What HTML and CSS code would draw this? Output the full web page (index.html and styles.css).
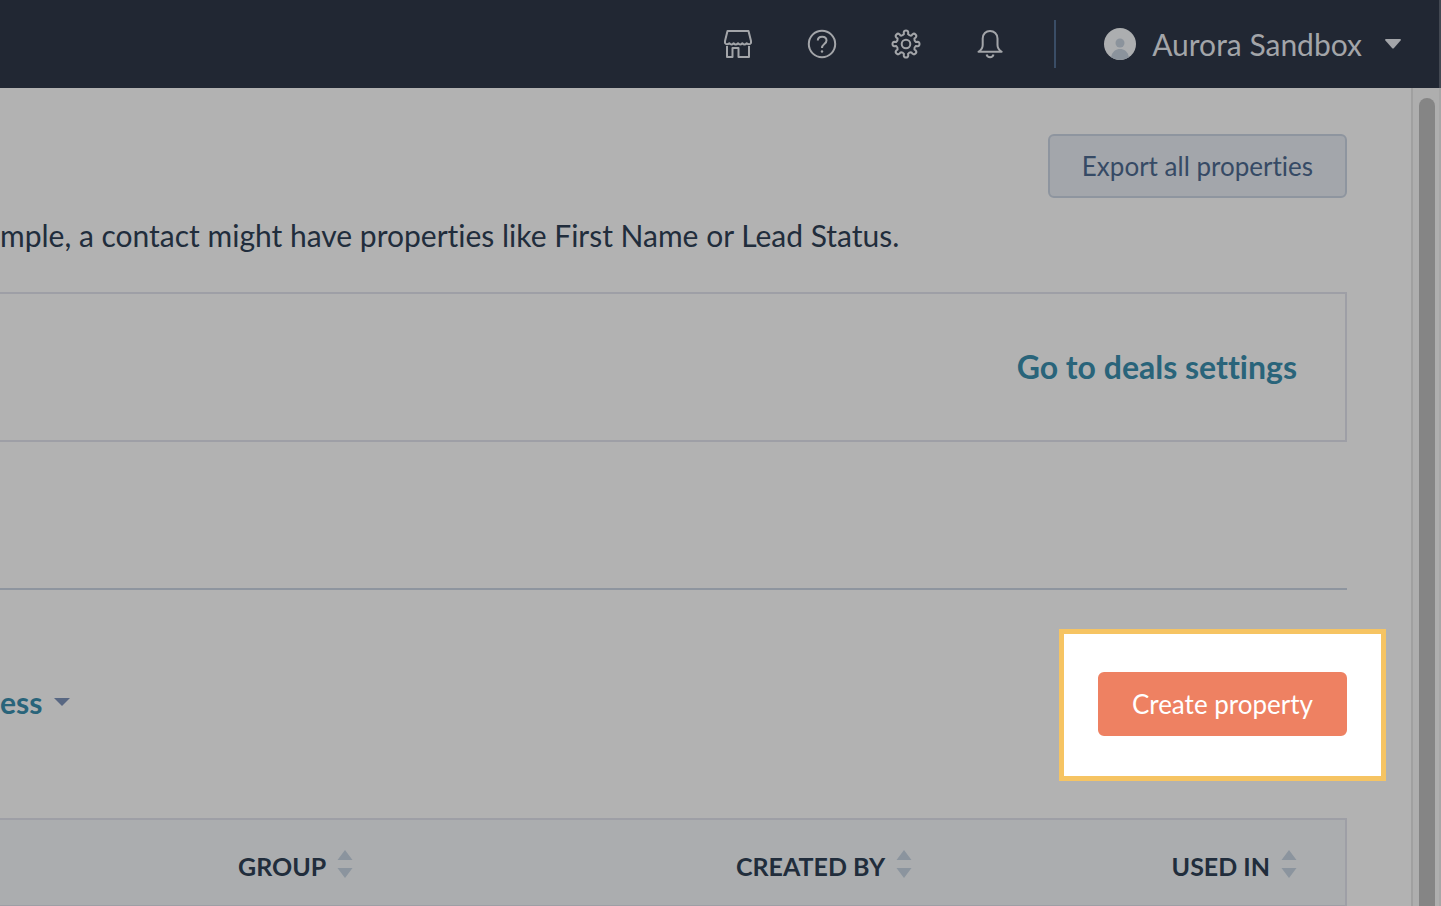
FILE: index.html
```html
<!DOCTYPE html>
<html lang="en">

<head>
  <meta charset="UTF-8">
  <meta name="viewport" content="width=device-width, initial-scale=1.0">
  <title>Properties</title>
  <link rel="stylesheet" href="styles.css">
</head>

<body>

  <header class="navbar">
    <nav class="nav-icons">
      <button type="button" class="nav-button" aria-label="Marketplace">
        <svg class="nav-icon" viewBox="0 0 32 32">
          <path d="M5.500 3h21L29 13v2q-1.800 2.400-4.300.2-2.200 2.400-4.400 0-2.200 2.400-4.300 0-2.200 2.400-4.400 0-2.200 2.400-4.300 0Q4.800 17.400 3 15v-2z" />
          <path d="M5 18v11h5.500v-9h6v9H27V18" />
        </svg>
      </button>
      <button type="button" class="nav-button" aria-label="Help">
        <svg class="nav-icon" viewBox="0 0 32 32">
          <circle cx="16" cy="16" r="13.200" />
          <path d="M11.800 12.500c0-5 8.700-5 8.700 0 0 3.700-4.500 3.500-4.500 7.500" />
          <circle class="dot" cx="16" cy="23.500" r="1.200" />
        </svg>
      </button>
      <button type="button" class="nav-button" aria-label="Settings">
        <svg class="nav-icon" viewBox="0 0 32 32">
          <circle cx="16" cy="16" r="4.300" />
          <path id="gear" />
        </svg>
      </button>
      <button type="button" class="nav-button" aria-label="Notifications">
        <svg class="nav-icon" viewBox="0 0 32 32">
          <path d="M4.500 23.800C7.500 22 8.700 20.500 8.700 17v-6.500C8.700 5.800 12 2.900 16 2.900s7.500 2.900 7.500 7.600V17c0 3.500 1.200 5 4.200 6.800z" />
          <path d="M12.600 26.500c.8 3.600 6.100 3.600 6.900 0" />
        </svg>
      </button>
    </nav>
    <button type="button" class="account">
      <svg class="avatar" viewBox="0 0 32 32">
        <circle cx="16" cy="16" r="16" fill="#acaeb0" />
        <circle cx="16" cy="15" r="4.500" fill="#8b939c" />
        <path d="M7 29.200C8.500 23 12 21 16 21s7.500 2 9 8.200Q16 34.800 7 29.200z" fill="#8b939c" />
      </svg>
      <span>Aurora Sandbox</span>
      <svg class="account-caret" viewBox="0 0 16 10"><path d="M1 0h14q1.500.5.600 1.600L9 9q-1 1-2 0L.4 1.600Q-.5.500 1 0z" /></svg>
    </button>
  </header>

  <div class="page">
    <main class="content">
      <div class="actions">
        <button type="button" class="button button-secondary">Export all properties</button>
      </div>
      <p class="description">mple, a contact might have properties like First Name or Lead Status.</p>

      <section class="panel">
        <a href="#" class="link">Go to deals settings</a>
      </section>

      <hr class="divider">

      <div class="toolbar">
        <button type="button" class="link filter">
          ess
          <svg class="filter-caret" viewBox="0 0 16 8"><path d="M0 0h16L8 8z" /></svg>
        </button>
        <div class="highlight">
          <button type="button" class="button button-primary">Create property</button>
        </div>
      </div>

      <table class="properties">
        <thead>
          <tr>
            <td class="col-name"></td>
            <th class="col-group" scope="col">
              <button type="button" class="sort">GROUP
                <svg class="sort-icon" viewBox="0 0 16 28"><path d="M8 0l7.500 10H.5zM.5 18h15L8 28z" /></svg>
              </button>
            </th>
            <th scope="col">
              <button type="button" class="sort">CREATED BY
                <svg class="sort-icon" viewBox="0 0 16 28"><path d="M8 0l7.500 10H.5zM.5 18h15L8 28z" /></svg>
              </button>
            </th>
            <th class="col-used" scope="col">
              <button type="button" class="sort">USED IN
                <svg class="sort-icon" viewBox="0 0 16 28"><path d="M8 0l7.500 10H.5zM.5 18h15L8 28z" /></svg>
              </button>
            </th>
          </tr>
        </thead>
      </table>
    </main>
    <div class="scrollbar">
      <div class="thumb"></div>
    </div>
  </div>

  <script>
    // eight rounded teeth around the settings icon
    function gearPath(teeth, inner, outer) {
      const point = (radius, degrees) => {
        const angle = degrees * Math.PI / 180;
        return (16 + radius * Math.sin(angle)).toFixed(2) + ' ' + (16 - radius * Math.cos(angle)).toFixed(2);
      };
      const step = 360 / teeth;
      let path = 'M' + point(inner, -12);
      for (let i = 0; i < teeth; i++) {
        const a = i * step;
        path += 'L' + point(outer - 2, a - 11);
        path += 'C' + point(outer + 0.5, a - 8) + ' ' + point(outer + 0.5, a + 8) + ' ' + point(outer - 2, a + 11);
        path += 'L' + point(inner, a + 12);
        path += 'Q' + point(inner - 1.2, a + step / 2) + ' ' + point(inner, a + step - 12);
      }
      return path + 'Z';
    }

    document.getElementById('gear').setAttribute('d', gearPath(8, 10, 13.8));
  </script>
</body>

</html>
```
FILE: styles.css
```css
* {
  box-sizing: border-box;
}

body {
  font-family: Lato, 'Open Sans', sans-serif;
  font-variant-ligatures: none;
  background-color: #b2b2b2;
  color: #212d3c;
  margin: 0;
  min-height: 100vh;
  display: flex;
  flex-direction: column;
}

button {
  font-family: inherit;
  font-variant-ligatures: none;
  border: none;
  background: none;
  padding: 0;
  cursor: pointer;
}

.navbar {
  height: 88px;
  padding-right: 38px;
  display: flex;
  align-items: center;
  justify-content: flex-end;
  background-color: #212733;
  border-right: 2px solid #434852;
}

.nav-icons {
  display: flex;
  align-items: center;
  gap: 52px;
  height: 48px;
  padding-right: 48px;
  border-right: 2px solid #3a4d66;
}

.nav-button,
.nav-icon {
  display: block;
  width: 32px;
  height: 32px;
}

.nav-icon {
  fill: none;
  stroke: #a3a5a9;
  stroke-width: 2;
  stroke-linejoin: round;
}

.nav-icon .dot {
  fill: #a3a5a9;
  stroke: none;
}

.account {
  display: flex;
  align-items: center;
  gap: 16px;
  padding-left: 48px;
  color: #a3a5a9;
  font-size: 30px;
  line-height: 40px;
}

.avatar {
  width: 32px;
  height: 32px;
}

.account-caret {
  width: 16px;
  height: 10px;
  margin-left: 7px;
  fill: #a3a5a9;
}

.page {
  flex: 1;
  display: flex;
}

.content {
  flex: 1;
  min-width: 0;
  padding: 46px 64px 0 0;
}

.actions {
  display: flex;
  justify-content: flex-end;
}

.button {
  height: 64px;
  padding: 0 32px;
  border: 2px solid;
  border-radius: 6px;
  font-size: 26px;
  line-height: 32px;
}

.button-secondary {
  color: #364a65;
  background-color: #a3a6ab;
  border-color: #8e959f;
}

.button-primary {
  color: #fff;
  background-color: #ee8162;
  border-color: #ee8162;
}

.description {
  margin: 17px 0 37px;
  font-size: 30px;
  line-height: 40px;
  white-space: nowrap;
}

.panel {
  display: flex;
  align-items: center;
  justify-content: flex-end;
  height: 150px;
  padding-right: 48px;
  border: 2px solid #9e9fa6;
  border-left: none;
}

.link {
  color: #29647a;
  font-size: 32px;
  font-weight: bold;
  line-height: 40px;
  text-decoration: none;
}

.divider {
  margin: 146px 0 0;
  border: none;
  border-top: 2px solid #8e959f;
}

.toolbar {
  display: flex;
  align-items: center;
  justify-content: space-between;
  padding: 39px 0 37px;
}

.filter {
  display: flex;
  align-items: center;
  gap: 12px;
  padding-bottom: 6px;
  font-size: 30px;
}

.filter-caret {
  width: 16px;
  height: 8px;
  fill: #586782;
}

.highlight {
  margin-right: -39px;
  padding: 38px 34px 40px;
  border: 5px solid #f6c463;
  background-color: #fff;
}

.highlight .button {
  display: block;
}

.properties {
  width: 100%;
  table-layout: fixed;
  border-collapse: separate;
  border-spacing: 0;
  background-color: #abadaf;
  border: 2px solid #9e9fa6;
  border-left: none;
  border-bottom-width: 1px;
}

.properties th {
  height: 85px;
  padding: 3px 0 0;
  text-align: left;
}

.properties .col-name {
  width: 238px;
}

.properties .col-group {
  width: 498px;
}

.properties .col-used {
  padding-right: 48px;
}

.sort {
  display: flex;
  align-items: flex-end;
  gap: 11px;
  color: #212d3c;
  font-size: 25px;
  font-weight: bold;
  line-height: 24px;
}

.col-used .sort {
  margin-left: auto;
}

.sort-icon {
  width: 16px;
  height: 28px;
  fill: #8b949e;
}

.scrollbar {
  width: 30px;
  padding: 10px 4px 0 6px;
  display: flex;
  border-left: 2px solid #a0a0a0;
  border-right: 2px solid #a6a6a6;
  background-color: #aeaeae;
}

.thumb {
  flex: 1;
  border-radius: 8px 8px 0 0;
  background-color: #858585;
}
```
